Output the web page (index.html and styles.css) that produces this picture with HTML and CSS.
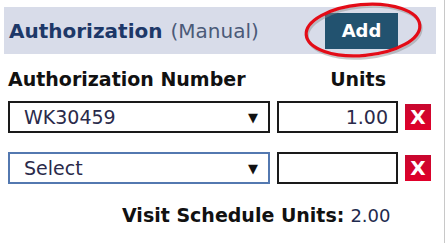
FILE: index.html
```html
<!DOCTYPE html>
<html>
<head>
<meta charset="utf-8">
<link rel="stylesheet" href="styles.css">
</head>
<body>
<div class="panel">
  <div class="header">
    <span class="title">Authorization</span>
    <span class="sub">(Manual)</span>
    <button class="add">Add</button>
    <svg class="circle" width="130" height="66" viewBox="0 0 130 66">
      <ellipse cx="65" cy="33" rx="57" ry="25.5" fill="none" stroke="#8a8a8a" stroke-width="2.5" opacity="0.45" transform="translate(1.5 2.5) rotate(-5 65 33)"/>
      <ellipse cx="65" cy="33" rx="57" ry="25.5" fill="none" stroke="#e30c17" stroke-width="3.2" transform="rotate(-5 65 33)"/>
    </svg>
  </div>
  <div class="cols">
    <span class="col-num">Authorization Number</span>
    <span class="col-units">Units</span>
  </div>
  <div class="row first">
    <div class="select"><span>WK30459</span><span class="arrow">▼</span></div>
    <div class="units">1.00</div>
    <div class="del">X</div>
  </div>
  <div class="row">
    <div class="select focus"><span>Select</span><span class="arrow">▼</span></div>
    <div class="units"></div>
    <div class="del">X</div>
  </div>
  <div class="total"><b>Visit Schedule Units:</b> <span class="val">2.00</span></div>
</div>
</body>
</html>
```
FILE: styles.css
```css
html, body {
  margin: 0;
  padding: 0;
  background: #fff;
}
body {
  width: 445px;
  height: 243px;
  overflow: hidden;
  font-family: "DejaVu Sans", Verdana, sans-serif;
}
.panel {
  width: 445px;
  height: 243px;
  border-right: 1px solid #c8c8c8;
  box-sizing: border-box;
  padding-top: 7px;
}
.header {
  position: relative;
  margin-left: 4px;
  width: 432px;
  height: 47px;
  background: #d8dce9;
  display: flex;
  align-items: center;
  padding-left: 5px;
  box-sizing: border-box;
}
.title {
  font-weight: bold;
  font-size: 20px;
  color: #1d3868;
}
.sub {
  font-size: 20px;
  color: #4b5a78;
  margin-left: 8px;
}
.add {
  margin-left: auto;
  margin-right: 38px;
  width: 73px;
  height: 36px;
  background: #22526f;
  border: none;
  color: #fff;
  font-family: "DejaVu Sans", sans-serif;
  font-weight: bold;
  font-size: 18px;
  padding: 0;
}
.circle {
  position: absolute;
  left: 294px;
  top: -10px;
}
.cols {
  display: flex;
  margin-top: 15px;
  padding-left: 8px;
  font-weight: bold;
  font-size: 19px;
  color: #111;
  height: 20px;
  align-items: center;
}
.col-units {
  margin-left: auto;
  margin-right: 58px;
}
.row {
  display: flex;
  align-items: center;
  padding-left: 8px;
  margin-top: 19px;
  height: 32px;
}
.row.first {
  margin-top: 12px;
}
.select {
  width: 262px;
  height: 32px;
  box-sizing: border-box;
  border: 2px solid #1a1a1a;
  display: flex;
  align-items: center;
  padding-left: 14px;
  padding-right: 10px;
  font-size: 19px;
  color: #2a2a4a;
}
.select.focus {
  border-color: #5378b0;
}
.arrow {
  margin-left: auto;
  font-size: 13px;
  color: #111;
}
.units {
  margin-left: 7px;
  width: 121px;
  height: 32px;
  box-sizing: border-box;
  border: 2px solid #1a1a1a;
  display: flex;
  align-items: center;
  justify-content: flex-end;
  padding-right: 8px;
  font-size: 19px;
  color: #2a2a4a;
}
.del {
  margin-left: 7px;
  width: 26px;
  height: 26px;
  background: linear-gradient(#c8072f, #e0002a);
  color: #fff;
  font-weight: bold;
  font-size: 20px;
  display: flex;
  align-items: center;
  justify-content: center;
}
.total {
  margin-top: 20px;
  padding-left: 122px;
  font-size: 19px;
  color: #1a1a2a;
}
.total b {
  color: #111;
}
.total .val {
  font-size: 18px;
  color: #1e2a4e;
}
```
